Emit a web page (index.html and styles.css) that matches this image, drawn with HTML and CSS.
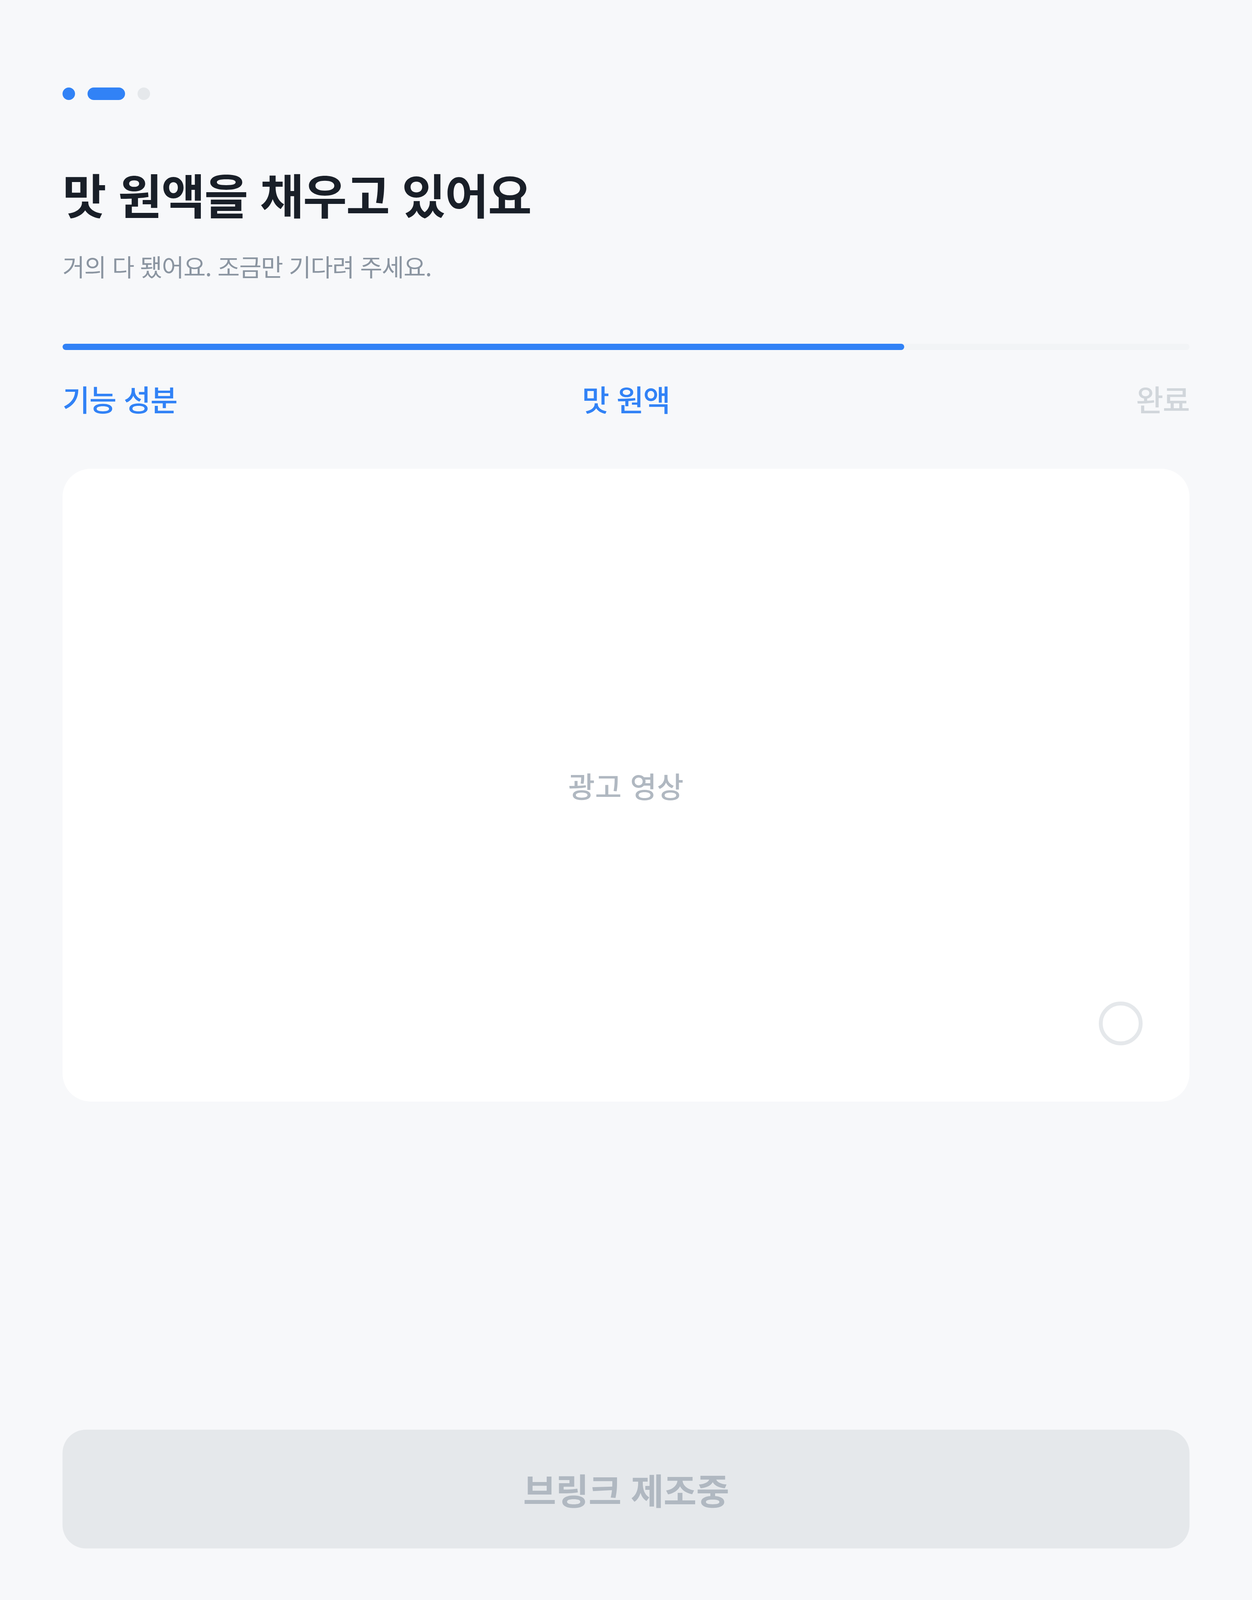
FILE: index.html
```html
<!DOCTYPE html>
<html lang="ko">
<head>
<meta charset="utf-8">
<title>맛 원액을 채우고 있어요</title>
<link rel="stylesheet" href="styles.css">
</head>
<body>
<main class="screen">
  <div class="pager">
    <span class="pager-dot is-done"></span>
    <span class="pager-dot is-current"></span>
    <span class="pager-dot"></span>
  </div>

  <h1 class="title">맛 원액을 채우고 있어요</h1>
  <p class="subtitle">거의 다 됐어요. 조금만 기다려 주세요.</p>

  <div class="progress">
    <div class="progress-fill" style="width: 74.7%"></div>
  </div>
  <div class="steps">
    <span class="step step-start is-active">기능 성분</span>
    <span class="step step-mid is-active">맛 원액</span>
    <span class="step step-end">완료</span>
  </div>

  <section class="ad-card">
    <span class="ad-label">광고 영상</span>
    <span class="ad-spinner"></span>
  </section>

  <div class="spacer"></div>

  <button class="cta" type="button" disabled>브링크 제조중</button>
</main>
</body>
</html>
```

FILE: styles.css
```css
html, body {
  margin: 0;
  padding: 0;
  background: #F7F8FA;
}

body {
  font-family: "Noto Sans CJK KR", "Noto Sans", sans-serif;
}

.screen {
  box-sizing: border-box;
  height: 100vh;
  display: flex;
  flex-direction: column;
  padding: 224px 160px 132px;
  overflow: hidden;
}

.pager {
  display: flex;
  gap: 32px;
  height: 32px;
  flex: none;
}

.pager-dot {
  width: 32px;
  height: 32px;
  border-radius: 16px;
  background: #E5E8EB;
}

.pager-dot.is-done {
  background: #3182F6;
}

.pager-dot.is-current {
  width: 96px;
  background: #3182F6;
}

.title {
  margin: 160px 0 0;
  font-size: 122px;
  line-height: 1.3;
  font-weight: 700;
  letter-spacing: -2px;
  color: #191F28;
}

.subtitle {
  margin: 60px 0 0;
  font-size: 62px;
  line-height: 1.5;
  font-weight: 400;
  letter-spacing: -1.5px;
  color: #8B95A1;
}

.progress {
  flex: none;
  margin-top: 152px;
  height: 16px;
  border-radius: 8px;
  background: #F2F4F6;
  overflow: hidden;
}

.progress-fill {
  height: 100%;
  border-radius: 8px;
  background: #3182F6;
}

.steps {
  margin-top: 71px;
  display: grid;
  grid-template-columns: 1fr auto 1fr;
}

.step {
  font-size: 76px;
  line-height: 1.4;
  font-weight: 500;
  letter-spacing: -1.5px;
  color: #D1D6DB;
}

.step-mid {
  text-align: center;
}

.step-end {
  text-align: right;
}

.step.is-active {
  color: #3182F6;
}

.ad-card {
  flex: none;
  position: relative;
  margin-top: 127px;
  height: 1620px;
  border-radius: 72px;
  background: #FFFFFF;
  display: flex;
  align-items: center;
  justify-content: center;
}

.ad-label {
  font-size: 74px;
  line-height: 1.4;
  font-weight: 500;
  letter-spacing: 0.5px;
  color: #B0B8C1;
}

.ad-spinner {
  position: absolute;
  right: 120px;
  bottom: 144px;
  box-sizing: border-box;
  width: 112px;
  height: 112px;
  border: 10px solid #E5E8EB;
  border-radius: 50%;
}

.spacer {
  flex: 1 1 auto;
}

.cta {
  flex: none;
  height: 304px;
  padding: 0;
  border: 0;
  border-radius: 60px;
  background: #E5E8EB;
  color: #B0B8C1;
  font-family: inherit;
  font-size: 92px;
  line-height: 1;
  font-weight: 700;
  letter-spacing: -1px;
}
```
